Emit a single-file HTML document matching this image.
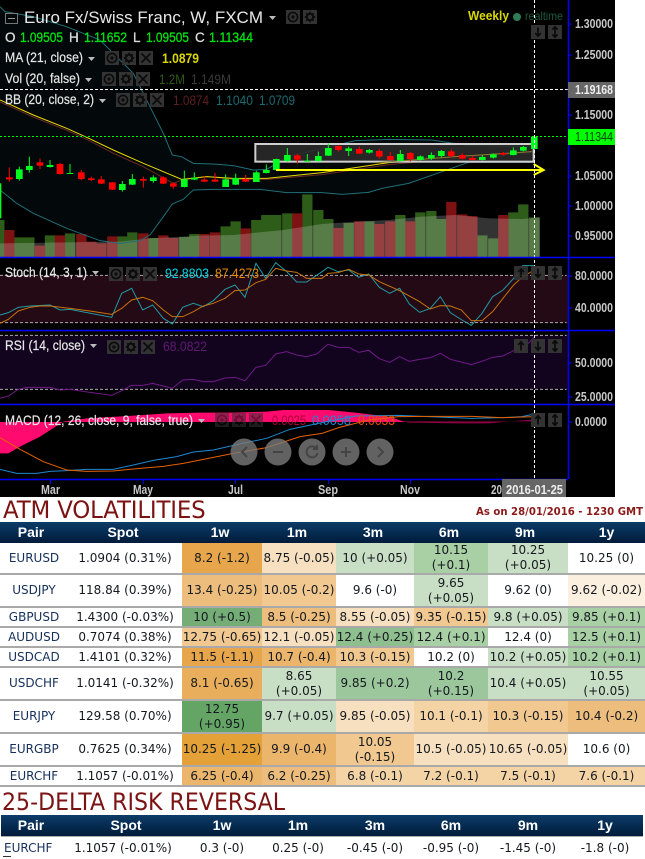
<!DOCTYPE html>
<html><head><meta charset="utf-8"><style>
html,body{margin:0;padding:0;background:#fff;width:645px;height:858px;overflow:hidden}
#c{position:absolute;left:0;top:0}
svg text{font-family:"Liberation Sans",sans-serif}
.l{fill:#e6e6e6;font-size:14px;font-weight:400;stroke:#e6e6e6;stroke-width:.2}
.a{fill:#c8c8c8;font-size:12.5px;font-weight:700}
.n{fill:none}
h1{position:absolute;margin:0;font:400 24px/24px "DejaVu Sans",sans-serif;color:#7c1313;white-space:nowrap}
table{position:absolute;border-collapse:separate;border-spacing:0;table-layout:fixed;font:12px/15px "DejaVu Sans",sans-serif;color:#15191f}
td,th{padding:0;text-align:center;white-space:nowrap;overflow:visible}
td{border-bottom:2px solid #a9a9a9;box-sizing:border-box}
th{color:#fff;font:700 14px/15px "Liberation Sans",sans-serif;background:linear-gradient(#0c3c68,#001b3a);height:21px}
td:first-child{color:#16305a}
.p4{padding-right:4px}.p6{padding-right:6px}
.g1{background:#c9dfc5}.g2{background:#a9cfa5}.g3{background:#9cc79c}.g4{background:#8fbf8f}
.o1{background:#f7e0bf}.o2{background:#f4d3a5}.o3{background:#f0c890}.o4{background:#edbd7d}.o5{background:#ebb56c}.o6{background:#e7a64b}.o7{background:#e4a138}.o0{background:#fbefdf}
</style></head><body>
<svg id="c" width="645" height="497" viewBox="0 0 645 497">
<defs>
<symbol id="e" viewBox="0 0 14 14"><rect width="14" height="14" fill="#333"/><circle cx="7" cy="7" r="4.6" fill="none" stroke="#0b0b0b" stroke-width="1.6"/><circle cx="7" cy="7" r="1.6" fill="#0b0b0b"/></symbol>
<symbol id="g" viewBox="0 0 14 14"><rect width="14" height="14" fill="#333"/><circle cx="7" cy="7" r="3.2" fill="none" stroke="#0b0b0b" stroke-width="2"/><path d="M7 1.800V3.500M7 10.500V12.200M1.800 7H3.500M10.500 7H12.200M3.300 3.300L4.500 4.500M9.500 9.500L10.700 10.700M3.300 10.700L4.500 9.500M9.500 4.500L10.700 3.300" stroke="#0b0b0b" stroke-width="1.800"/></symbol>
<symbol id="x" viewBox="0 0 14 14"><rect width="14" height="14" fill="#333"/><path d="M2.500 2.500L11.500 11.500M11.500 2.500L2.500 11.500" stroke="#0b0b0b" stroke-width="1.700"/></symbol>
<symbol id="u" viewBox="0 0 14 14"><rect width="14" height="14" fill="#333"/><path d="M7 3V11.500M4.200 6L7 2.800L9.800 6" fill="none" stroke="#0b0b0b" stroke-width="1.700"/></symbol>
<symbol id="d" viewBox="0 0 14 14"><rect width="14" height="14" fill="#333"/><path d="M7 2.500V11M4.200 8L7 11.200L9.800 8" fill="none" stroke="#0b0b0b" stroke-width="1.700"/></symbol>
<symbol id="b" viewBox="0 0 14 14"><rect width="14" height="14" fill="#333"/><path d="M7 2V12M4.400 4.600L7 1.800L9.600 4.600M4.400 9.400L7 12.200L9.600 9.400" fill="none" stroke="#0b0b0b" stroke-width="1.700"/></symbol>
</defs>
<rect width="615" height="497" fill="#000"/>
<rect x="0" y="275" width="568" height="48" fill="#240a14"/>
<rect x="0" y="335" width="568" height="54" fill="#12041f"/>
<g transform="scale(.33333)">
<path d="M0 20L15 35L100 50L200 80L300 120L400 220L450 320L490 400L517 465L545 470L580 490L640 492L700 497L760 510L800 508L830 490L860 470L966 445L1066 422L1166 418L1296 420L1406 437L1603 440V487H1406L1326 515L1226 550L1146 565L1106 577L1026 583L966 578L860 578L780 568L640 568L580 570L550 598L517 612L490 650L450 705L420 722L360 730L300 722L200 685L100 640L50 610L0 570Z" fill="#03090b"/>
<g class="n" stroke-width="31">
<path stroke="#2e5c19" d="M-2 660V772M58 712V772M88 712V772M150 706V772M210 700V772M367 709V772M397 697V772M460 714V772M553 711V772M583 702V772M677 679V772M707 664V772M769 660V772M799 645V772M829 645V772M862 640V772M922 583V772M955 630V772M985 657V772M1046 669V772M1108 664V772M1201 645V772M1261 637V772M1294 633V772M1324 657V772M1447 706V772M1480 715V772M1540 637V772M1570 613V772M1603 652V772"/>
<path stroke="#7c1212" d="M28 690V772M120 737V772M180 706V772M244 702V772M274 725V772M304 730V772M337 709V772M430 700V772M490 706V772M520 714V772M613 702V772M645 697V772M737 685V772M892 640V772M1015 684V772M1078 664V772M1138 672V772M1171 664V772M1231 664V772M1354 606V772M1387 643V772M1417 648V772M1510 645V772"/>
</g>
<path d="M0 730L200 727L360 725L450 715L600 707L700 705L850 690L966 672L1066 665L1166 660L1266 650L1366 645L1466 655L1566 657L1620 652V772H0Z" fill="#fff" fill-opacity=".2"/>
<path class="n" stroke="#1f6f78" stroke-width="3" d="M0 20L15 35L100 50L200 80L300 120L400 220L450 320L490 400L517 465L545 470L580 490L640 492L700 497L760 510L800 508L830 490L860 470L966 445L1066 422L1166 418L1296 420L1406 437L1603 440"/>
<path class="n" stroke="#1f6f78" stroke-width="3" d="M0 570L50 610L100 640L200 685L300 722L360 730L420 722L450 705L490 650L517 612L550 598L580 570L640 568L780 568L860 578L966 578L1026 583L1106 577L1146 565L1226 550L1326 515L1406 487L1603 487"/>
<path class="n" stroke="#6b2a20" stroke-width="3" d="M0 306L100 351L200 391L260 418L340 460L430 500L520 550L545 540L620 530L700 538L800 538L966 524L1166 494L1366 476L1596 458"/>
<path class="n" stroke="#e8d800" stroke-width="3" d="M0 300L100 345L200 385L260 412L340 450L430 490L545 538L620 530L700 535L800 535L966 518L1166 488L1366 470L1596 455"/>
<rect x="766" y="432" width="835" height="53" fill="#2a2a2a" fill-opacity=".9" stroke="#cfcfcf" stroke-width="6"/>
<path class="n" stroke="#8a7a30" stroke-width="3" d="M1130 488L1366 470L1596 455"/>
<path class="n" stroke="#00ff1e" stroke-width="3" d="M58 500V542M88 470V518M150 480V503M210 492V522M367 543V575M397 522V555M460 526V548M553 512V562M583 517V540M677 523V561M707 521V555M769 512V546M799 493V520M829 476V512M862 444V485M922 462V485M955 455V485M985 430V468M1046 440V468M1108 447V461M1201 450V483M1261 466V481M1294 457V480M1324 450V472M1447 465V481M1480 460V476M1540 442V466M1570 438V454"/>
<path class="n" stroke="#00ff1e" stroke-width="20" d="M58 508V537M88 498V510M150 495V501M367 552V570M397 537V554M460 532V543M553 538V561M583 533V539M677 538V561M707 534V554M769 517V546M799 510V519M829 477V510M862 465V483M922 482V485M955 468V483M985 444V467M1046 445V453M1108 450V458M1201 462V483M1261 469V480M1294 465V475M1324 453V468M1447 471V480M1480 463V473M1540 451V465M1570 441V452M1603 410V447M210 519V522"/>
<path class="n" stroke="#f00" stroke-width="3" d="M28 502V545M120 475V507M180 488V524M244 510V540M274 530V543M304 528V552M337 546V570M430 530V563M490 529V552M520 547V566M613 528V546M645 519V545M737 525V546M892 462V490M1015 436V455M1078 440V462M1138 447V476M1171 456V481M1231 456V485M1354 448V473M1387 460V478M1417 466V482M1510 456V467"/>
<path class="n" stroke="#f00" stroke-width="20" d="M28 532V538M120 487V497M180 492V522M244 517V537M274 535V540M304 538V551M337 547V569M430 537V542M490 532V551M520 550V560M613 539V545M645 539V545M737 537V545M892 466V479M1015 438V450M1078 447V461M1138 453V470M1171 468V480M1231 459V477M1354 454V468M1387 465V476M1417 474V480M1510 459V464"/>
<path stroke="#00ff1e" stroke-width="6" d="M1 550V655"/>
<path class="n" stroke="#ff0" stroke-width="6" d="M828 510H1625M1601 492L1631 510L1601 525"/>
<g transform="translate(0,780)">
<path class="n" stroke="#aaa" stroke-width="3" stroke-dasharray="9 6" d="M0 46H1700M0 188H1700M0 226H1700M0 388H1700"/>
<path class="n" stroke="#229aa5" stroke-width="3" d="M0 165L25 158L55 142L90 138L150 135L180 150L210 148L335 172L365 100L395 85L428 150L458 135L490 175L517 192L548 142L580 130L610 140L640 122L675 88L705 75L735 112L768 10L797 55L827 8L860 35L890 66L920 66L966 35L984 22L1014 35L1046 30L1076 52L1106 42L1138 82L1169 100L1199 85L1228 132L1259 157L1291 145L1321 110L1351 158L1386 180L1414 196L1446 160L1478 110L1509 90L1541 55L1568 17L1603 17"/>
<path class="n" stroke="#c8720e" stroke-width="3" d="M0 190L25 178L55 153L90 142L120 138L150 138L210 145L270 153L335 163L365 145L395 120L428 112L458 122L490 150L517 170L548 170L580 155L610 138L640 130L675 115L705 92L735 90L768 68L797 58L827 25L860 33L890 37L920 55L966 55L984 40L1014 38L1046 28L1076 42L1106 45L1138 65L1199 92L1259 125L1291 147L1321 137L1351 138L1384 150L1414 182L1446 182L1478 155L1509 115L1541 75L1568 50L1603 30"/>
<path class="n" stroke="#6f1a86" stroke-width="3" d="M0 415L25 408L55 388L80 382L150 382L180 390L210 388L270 397L335 406L365 392L395 376L428 376L458 370L490 378L517 385L548 360L580 358L610 365L640 365L675 354L705 352L735 362L768 322L797 316L827 282L860 275L890 285L920 290L950 282L966 268L984 253L1014 262L1046 262L1076 277L1106 271L1138 296L1169 307L1199 290L1228 304L1259 298L1291 293L1321 280L1351 298L1384 306L1414 314L1446 304L1478 292L1509 288L1541 272L1568 265L1603 232"/>
<path fill="#ff0a6e" d="M0 485V580H25L60 560L120 530L190 485L260 475L400 467L500 460L600 458L700 458L800 455L850 450L986 450L1066 458L1166 470L1206 483L1226 486H0Z"/>
<path fill="#8a0040" d="M1206 484H1603V478L1466 490L1366 490L1226 488Z"/>
<path class="n" stroke="#1e88d0" stroke-width="3" d="M0 628L50 640L110 640L150 634L200 632L260 628L340 628L400 615L460 601L530 590L580 576L640 570L700 556L800 535L870 508L966 488L1066 468L1196 466L1286 470L1416 475L1506 473L1566 470L1603 462"/>
<path class="n" stroke="#e86000" stroke-width="3" d="M0 533L60 568L130 605L200 630L260 634L340 633L420 625L490 619L550 610L640 592L700 580L800 563L900 530L966 520L1016 503L1106 480L1196 470L1286 469L1416 469L1506 473L1603 470"/>
</g>
</g>
<path class="n" stroke="#fff" stroke-dasharray="3 2" d="M0 89.500H568"/>
<path class="n" stroke="#0f0" stroke-dasharray="2 2" d="M0 136.500H568"/>
<path class="n" stroke="#fff" stroke-dasharray="3 2" d="M534.500 0V479"/>
<path class="n" stroke="#00f" stroke-width="1.500" d="M568.500 0V479M0 257.500H615M0 330.500H615M0 404.500H615M0 479.500H568"/>
<path class="n" stroke="#00f" d="M568 24H572M568 55H572M568 115H572M568 176H572M568 206H572M568 236H572M568 276H572M568 308H572M568 363H572M568 397H572M568 422H572M50.500 480V484M143.500 480V484M235.500 480V484M328.500 480V484M410.500 480V484"/>
<g fill="#7a7a7a" fill-opacity=".8"><circle cx="244" cy="452" r="13.500"/><circle cx="278" cy="452" r="13.500"/><circle cx="312" cy="452" r="13.500"/><circle cx="346" cy="452" r="13.500"/><circle cx="380" cy="452" r="13.500"/></g>
<g class="n" stroke="#444" stroke-width="2"><path d="M247 447L242 452L247 457M273 452H283M341 452H351M346 447V457M378 447L383 452L378 457"/><path d="M316 448A5.500 5.500 0 1 0 317.500 453M317 445V449H313"/></g>
<rect x="568" y="82" width="47" height="16" fill="#666"/>
<rect x="568" y="129" width="47" height="16" fill="#0f0"/>
<rect x="502" y="479" width="64" height="18" fill="#666"/>
<text class="a" x="575" y="28" textLength="38" lengthAdjust="spacingAndGlyphs">1.30000</text>
<text class="a" x="575" y="59" textLength="38" lengthAdjust="spacingAndGlyphs">1.25000</text>
<text class="a" x="575" y="94" textLength="38" lengthAdjust="spacingAndGlyphs" style="fill:#eee">1.19168</text>
<text class="a" x="575" y="119" textLength="38" lengthAdjust="spacingAndGlyphs">1.15000</text>
<text class="a" x="575" y="141" textLength="38" lengthAdjust="spacingAndGlyphs" style="fill:#0a3a0a;font-weight:400">1.11344</text>
<text class="a" x="575" y="180" textLength="38" lengthAdjust="spacingAndGlyphs">1.05000</text>
<text class="a" x="575" y="210" textLength="38" lengthAdjust="spacingAndGlyphs">1.00000</text>
<text class="a" x="575" y="240" textLength="38" lengthAdjust="spacingAndGlyphs">0.95000</text>
<text class="a" x="575" y="280" textLength="38" lengthAdjust="spacingAndGlyphs">80.0000</text>
<text class="a" x="575" y="312" textLength="38" lengthAdjust="spacingAndGlyphs">40.0000</text>
<text class="a" x="575" y="367" textLength="38" lengthAdjust="spacingAndGlyphs">50.0000</text>
<text class="a" x="575" y="401" textLength="38" lengthAdjust="spacingAndGlyphs">25.0000</text>
<text class="a" x="575" y="426" textLength="32" lengthAdjust="spacingAndGlyphs">0.0000</text>
<text class="a" x="41" y="494" textLength="19" lengthAdjust="spacingAndGlyphs">Mar</text>
<text class="a" x="133" y="494" textLength="20" lengthAdjust="spacingAndGlyphs">May</text>
<text class="a" x="228" y="494" textLength="15" lengthAdjust="spacingAndGlyphs">Jul</text>
<text class="a" x="318" y="494" textLength="20" lengthAdjust="spacingAndGlyphs">Sep</text>
<text class="a" x="400" y="494" textLength="20" lengthAdjust="spacingAndGlyphs">Nov</text>
<text class="a" x="491" y="494" textLength="11" lengthAdjust="spacingAndGlyphs">20</text>
<text class="a" x="506" y="494" textLength="57" lengthAdjust="spacingAndGlyphs" style="fill:#eee">2016-01-25</text>
<rect x="5.500" y="13.500" width="12" height="10" class="n" stroke="#777"/><path d="M8 18.500H15" stroke="#999"/>
<text x="24" y="23" fill="#e8e8e8" font-size="17" textLength="239" lengthAdjust="spacingAndGlyphs">Euro Fx/Swiss Franc, W, FXCM</text>
<path d="M269 16H276L272.500 20Z" fill="#bbb"/>
<use href="#e" x="286" y="10" width="14" height="14"/><use href="#g" x="303" y="10" width="14" height="14"/>
<g font-size="13.500" stroke-width=".3">
<text x="5" y="42" fill="#ddd" stroke="#ddd">O</text><text x="20" y="42" textLength="43" lengthAdjust="spacingAndGlyphs" fill="#00e010" stroke="#00e010">1.09505</text>
<text x="69" y="42" fill="#ddd" stroke="#ddd">H</text><text x="84" y="42" textLength="43" lengthAdjust="spacingAndGlyphs" fill="#00e010" stroke="#00e010">1.11652</text>
<text x="133" y="42" fill="#ddd" stroke="#ddd">L</text><text x="146" y="42" textLength="43" lengthAdjust="spacingAndGlyphs" fill="#00e010" stroke="#00e010">1.09505</text>
<text x="195" y="42" fill="#ddd" stroke="#ddd">C</text><text x="209" y="42" textLength="44" lengthAdjust="spacingAndGlyphs" fill="#00e010" stroke="#00e010">1.11344</text>
</g>
<text class="l" x="5" y="62" textLength="78" lengthAdjust="spacingAndGlyphs">MA (21, close)</text><path d="M88 57H95L91.500 61Z" fill="#bbb"/>
<use href="#e" x="105" y="51" width="14" height="14"/><use href="#g" x="122" y="51" width="14" height="14"/><use href="#x" x="139" y="51" width="14" height="14"/>
<text x="162" y="63" font-size="14" font-weight="700" fill="#d8d800" textLength="37" lengthAdjust="spacingAndGlyphs">1.0879</text>
<text class="l" x="5" y="83" textLength="75" lengthAdjust="spacingAndGlyphs">Vol (20, false)</text><path d="M85 78H92L88.500 82Z" fill="#bbb"/>
<use href="#e" x="102" y="72" width="14" height="14"/><use href="#g" x="119" y="72" width="14" height="14"/><use href="#x" x="136" y="72" width="14" height="14"/>
<text x="159" y="84" font-size="14" fill="#2f5a1a" textLength="26" lengthAdjust="spacingAndGlyphs">1.2M</text>
<text x="191" y="84" font-size="14" fill="#3a3a3a" textLength="40" lengthAdjust="spacingAndGlyphs">1.149M</text>
<text class="l" x="5" y="104" textLength="89" lengthAdjust="spacingAndGlyphs">BB (20, close, 2)</text><path d="M99 99H106L102.500 103Z" fill="#bbb"/>
<use href="#e" x="116" y="93" width="14" height="14"/><use href="#g" x="133" y="93" width="14" height="14"/><use href="#x" x="150" y="93" width="14" height="14"/>
<text x="173" y="105" font-size="14" fill="#5c1f1f" textLength="36" lengthAdjust="spacingAndGlyphs">1.0874</text>
<text x="216" y="105" font-size="14" fill="#1a6a70" textLength="37" lengthAdjust="spacingAndGlyphs">1.1040</text>
<text x="259" y="105" font-size="14" fill="#1a6a70" textLength="36" lengthAdjust="spacingAndGlyphs">1.0709</text>
<text x="468" y="20" font-size="13" font-weight="700" fill="#d8d800" textLength="41" lengthAdjust="spacingAndGlyphs">Weekly</text>
<circle cx="517" cy="17" r="4" fill="#2f7d55"/>
<text x="525" y="20" font-size="12" fill="#1f5a40" textLength="38" lengthAdjust="spacingAndGlyphs">realtime</text>
<use href="#d" x="531" y="25" width="14" height="14"/><use href="#b" x="548" y="25" width="14" height="14"/>
<text class="l" x="5" y="277" textLength="82" lengthAdjust="spacingAndGlyphs">Stoch (14, 3, 1)</text><path d="M92 271H99L95.500 275Z" fill="#bbb"/>
<use href="#e" x="109" y="267" width="14" height="14"/><use href="#g" x="126" y="267" width="14" height="14"/><use href="#x" x="143" y="267" width="14" height="14"/>
<text x="165" y="278" font-size="14" fill="#00d8e8" textLength="44" lengthAdjust="spacingAndGlyphs">92.8803</text>
<text x="215" y="278" font-size="14" fill="#e88a00" textLength="44" lengthAdjust="spacingAndGlyphs">87.4273</text>
<use href="#u" x="514" y="266" width="14" height="14" opacity=".9"/><use href="#d" x="531" y="266" width="14" height="14"/><use href="#b" x="548" y="266" width="14" height="14"/>
<text class="l" x="5" y="350" textLength="80" lengthAdjust="spacingAndGlyphs">RSI (14, close)</text><path d="M90 344H97L93.500 348Z" fill="#bbb"/>
<use href="#e" x="107" y="340" width="14" height="14"/><use href="#g" x="124" y="340" width="14" height="14"/><use href="#x" x="141" y="340" width="14" height="14"/>
<text x="163" y="351" font-size="14" fill="#5f1a70" textLength="44" lengthAdjust="spacingAndGlyphs">68.0822</text>
<use href="#u" x="514" y="339" width="14" height="14"/><use href="#d" x="531" y="339" width="14" height="14"/><use href="#b" x="548" y="339" width="14" height="14"/>
<text class="l" x="5" y="425" textLength="188" lengthAdjust="spacingAndGlyphs">MACD (12, 26, close, 9, false, true)</text><path d="M198 419H205L201.500 423Z" fill="#bbb"/>
<use href="#e" x="215" y="413" width="14" height="14" opacity=".55"/><use href="#g" x="232" y="413" width="14" height="14" opacity=".55"/><use href="#x" x="249" y="413" width="14" height="14" opacity=".55"/>
<text x="272" y="425" font-size="14" fill="#b00038" textLength="34" lengthAdjust="spacingAndGlyphs">0.0025</text>
<text x="312" y="425" font-size="14" fill="#1e88d0" textLength="39" lengthAdjust="spacingAndGlyphs">0.0058</text>
<text x="358" y="425" font-size="14" fill="#e85000" textLength="37" lengthAdjust="spacingAndGlyphs">0.0033</text>
<use href="#u" x="531" y="413" width="14" height="14"/><use href="#b" x="548" y="413" width="14" height="14"/>
</svg>

<h1 style="left:3px;top:498px;letter-spacing:-.2px;transform-origin:0 0;transform:scaleX(.955)">ATM VOLATILITIES</h1>
<div style="position:absolute;left:476px;top:505px;font:700 11px/14px 'DejaVu Sans',sans-serif;color:#8b1a1a;white-space:nowrap;transform-origin:0 0;transform:scaleX(.92)">As on 28/01/2016 - 1230 GMT</div>

<table style="left:0;top:522px;width:645px">
<colgroup><col style="width:68px"><col style="width:114px"><col style="width:80px"><col style="width:74px"><col style="width:78px"><col style="width:74px"><col style="width:80px"><col style="width:77px"></colgroup>
<tr><th class="p6">Pair</th><th class="p4">Spot</th><th class="p4">1w</th><th class="p4">1m</th><th class="p4">3m</th><th class="p4">6m</th><th class="p6">9m</th><th>1y</th></tr>
<tr style="height:32px"><td>EURUSD</td><td>1.0904 (0.31%)</td><td class="o6">8.2 (-1.2)</td><td class="o1">8.75 (-0.05)</td><td class="g1">10 (+0.05)</td><td class="g2">10.15<br>(+0.1)</td><td class="g1">10.25<br>(+0.05)</td><td>10.25 (0)</td></tr>
<tr style="height:33px"><td>USDJPY</td><td>118.84 (0.39%)</td><td class="o4">13.4 (-0.25)</td><td class="o3">10.05 (-0.2)</td><td>9.6 (-0)</td><td class="g1">9.65<br>(+0.05)</td><td>9.62 (0)</td><td class="o0">9.62 (-0.02)</td></tr>
<tr style="height:20px"><td>GBPUSD</td><td>1.4300 (-0.03%)</td><td style="background:#74ae76">10 (+0.5)</td><td class="o4">8.5 (-0.25)</td><td class="o1">8.55 (-0.05)</td><td class="o3">9.35 (-0.15)</td><td class="g1">9.8 (+0.05)</td><td class="g2">9.85 (+0.1)</td></tr>
<tr style="height:20px"><td>AUDUSD</td><td>0.7074 (0.38%)</td><td class="o3">12.75 (-0.65)</td><td class="o1">12.1 (-0.05)</td><td class="g4">12.4 (+0.25)</td><td class="g2">12.4 (+0.1)</td><td>12.4 (0)</td><td class="g2">12.5 (+0.1)</td></tr>
<tr style="height:20px"><td>USDCAD</td><td>1.4101 (0.32%)</td><td class="o6">11.5 (-1.1)</td><td class="o5">10.7 (-0.4)</td><td class="o3">10.3 (-0.15)</td><td>10.2 (0)</td><td class="g1">10.2 (+0.05)</td><td class="g2">10.2 (+0.1)</td></tr>
<tr style="height:33px"><td>USDCHF</td><td>1.0141 (-0.32%)</td><td style="background:#e9ae5c">8.1 (-0.65)</td><td class="g1">8.65<br>(+0.05)</td><td class="g3">9.85 (+0.2)</td><td class="g3">10.2<br>(+0.15)</td><td class="g1">10.4 (+0.05)</td><td class="g1">10.55<br>(+0.05)</td></tr>
<tr style="height:33px"><td>EURJPY</td><td>129.58 (0.70%)</td><td style="background:#64a566">12.75<br>(+0.95)</td><td class="g1">9.7 (+0.05)</td><td class="o1">9.85 (-0.05)</td><td class="o2">10.1 (-0.1)</td><td class="o3">10.3 (-0.15)</td><td class="o4">10.4 (-0.2)</td></tr>
<tr style="height:33px"><td>EURGBP</td><td>0.7625 (0.34%)</td><td class="o7">10.25 (-1.25)</td><td class="o5">9.9 (-0.4)</td><td class="o3">10.05<br>(-0.15)</td><td class="o1">10.5 (-0.05)</td><td class="o1">10.65 (-0.05)</td><td>10.6 (0)</td></tr>
<tr style="height:20px"><td>EURCHF</td><td>1.1057 (-0.01%)</td><td class="o5">6.25 (-0.4)</td><td class="o4">6.2 (-0.25)</td><td class="o2">6.8 (-0.1)</td><td class="o2">7.2 (-0.1)</td><td class="o2">7.5 (-0.1)</td><td class="o2">7.6 (-0.1)</td></tr>
</table>

<h1 style="left:2px;top:790px;transform-origin:0 0;transform:scaleX(.92)">25-DELTA RISK REVERSAL</h1>

<table style="left:1px;top:815px;width:642px">
<colgroup><col style="width:60px"><col style="width:124px"><col style="width:74px"><col style="width:78px"><col style="width:76px"><col style="width:76px"><col style="width:78px"><col style="width:76px"></colgroup>
<tr><th style="height:20px">Pair</th><th style="padding-left:6px">Spot</th><th>1w</th><th>1m</th><th>3m</th><th>6m</th><th>9m</th><th>1y</th></tr>
<tr style="height:23px"><td style="border-bottom:0;border-top:1px solid #aaa;text-align:left;padding-left:3px">EURCHF</td><td style="border-bottom:0;border-top:1px solid #aaa">1.1057 (-0.01%)</td><td style="border-bottom:0;border-top:1px solid #aaa">0.3 (-0)</td><td style="border-bottom:0;border-top:1px solid #aaa">0.25 (-0)</td><td style="border-bottom:0;border-top:1px solid #aaa">-0.45 (-0)</td><td style="border-bottom:0;border-top:1px solid #aaa">-0.95 (-0)</td><td style="border-bottom:0;border-top:1px solid #aaa">-1.45 (-0)</td><td style="border-bottom:0;border-top:1px solid #aaa">-1.8 (-0)</td></tr>
</table>
<div style="position:absolute;left:3px;top:856px;width:8px;height:1px;background:#333"></div>
</body></html>
